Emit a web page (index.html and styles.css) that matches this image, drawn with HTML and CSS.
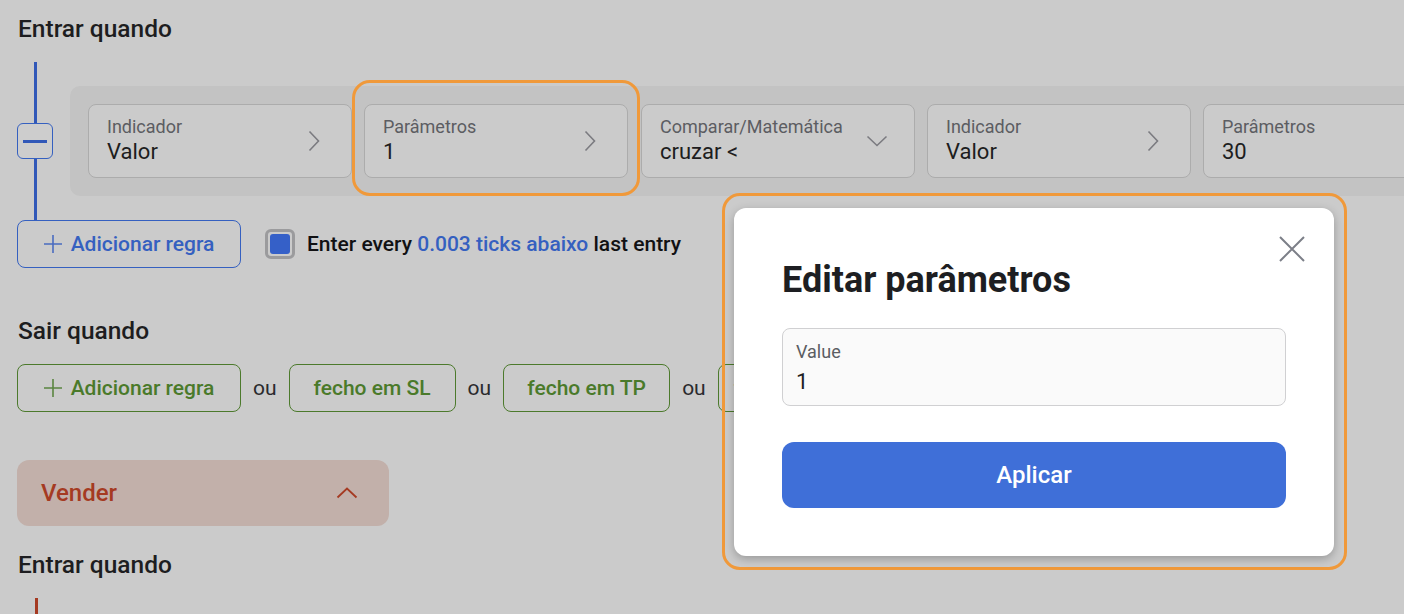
FILE: index.html
```html
<!DOCTYPE html>
<html lang="pt">
<head>
<meta charset="utf-8">
<title>Editar parâmetros</title>
<link rel="stylesheet" href="styles.css">
</head>
<body>
<div class="page">
  <h2 class="section-title first">Entrar quando</h2>
  <div class="rule-row">
    <div class="rail">
      <span class="rail-line"></span>
      <button class="minus-btn" aria-label="remover"><span></span></button>
      <span class="rail-line"></span>
    </div>
    <div class="rule-box">
      <div class="card">
        <div class="card-text"><span class="card-label">Indicador</span><span class="card-value">Valor</span></div>
        <svg class="chev" width="12" height="22" viewBox="0 0 12 22"><path d="M1.5 1.5 L10.5 11 L1.5 20.5" fill="none" stroke="#7b7b80" stroke-width="1.6"/></svg>
      </div>
      <div class="card highlighted">
        <div class="card-text"><span class="card-label">Parâmetros</span><span class="card-value">1</span></div>
        <svg class="chev" width="12" height="22" viewBox="0 0 12 22"><path d="M1.5 1.5 L10.5 11 L1.5 20.5" fill="none" stroke="#7b7b80" stroke-width="1.6"/></svg>
        <span class="hl-ring"></span>
      </div>
      <div class="card wide">
        <div class="card-text"><span class="card-label">Comparar/Matemática</span><span class="card-value">cruzar &lt;</span></div>
        <svg class="chev down" width="22" height="12" viewBox="0 0 22 12"><path d="M1.5 1.5 L11 10.5 L20.5 1.5" fill="none" stroke="#7b7b80" stroke-width="1.6"/></svg>
      </div>
      <div class="card">
        <div class="card-text"><span class="card-label">Indicador</span><span class="card-value">Valor</span></div>
        <svg class="chev" width="12" height="22" viewBox="0 0 12 22"><path d="M1.5 1.5 L10.5 11 L1.5 20.5" fill="none" stroke="#7b7b80" stroke-width="1.6"/></svg>
      </div>
      <div class="card">
        <div class="card-text"><span class="card-label">Parâmetros</span><span class="card-value">30</span></div>
        <svg class="chev" width="12" height="22" viewBox="0 0 12 22"><path d="M1.5 1.5 L10.5 11 L1.5 20.5" fill="none" stroke="#7b7b80" stroke-width="1.6"/></svg>
      </div>
    </div>
  </div>
  <div class="action-row">
    <button class="pill blue"><svg width="18" height="18" viewBox="0 0 18 18"><path d="M9 0 V18 M0 9 H18" stroke="currentColor" stroke-width="1.6" fill="none"/></svg>Adicionar regra</button>
    <span class="checkbox"><span></span></span>
    <span class="every">Enter every <span class="link">0.003 ticks abaixo</span> last entry</span>
  </div>

  <h2 class="section-title exit">Sair quando</h2>
  <div class="exit-row">
    <button class="pill green"><svg width="18" height="18" viewBox="0 0 18 18"><path d="M9 0 V18 M0 9 H18" stroke="currentColor" stroke-width="1.6" fill="none"/></svg>Adicionar regra</button>
    <span class="ou">ou</span>
    <button class="pill green narrow">fecho em SL</button>
    <span class="ou">ou</span>
    <button class="pill green narrow">fecho em TP</button>
    <span class="ou">ou</span>
    <button class="pill green narrow">fecho em hora</button>
  </div>

  <div class="sell-bar">
    <span>Vender</span>
    <svg width="22" height="12" viewBox="0 0 22 12"><path d="M1.5 10.5 L11 1.5 L20.5 10.5" fill="none" stroke="#a53a22" stroke-width="1.8"/></svg>
  </div>
  <h2 class="section-title sell-enter">Entrar quando</h2>
  <span class="red-line"></span>
</div>

<span class="modal-ring"></span>
<div class="modal" role="dialog">
  <svg class="close" width="26" height="26" viewBox="0 0 26 26"><path d="M1 1 L25 25 M25 1 L1 25" stroke="#7c7f88" stroke-width="2" fill="none"/></svg>
  <h1 class="modal-title">Editar parâmetros</h1>
  <div class="field">
    <span class="field-label">Value</span>
    <span class="field-value">1</span>
  </div>
  <button class="apply">Aplicar</button>
</div>
</body>
</html>
```
FILE: styles.css
```css
* { box-sizing: border-box; }
html, body { margin: 0; padding: 0; }
body {
  width: 1404px;
  height: 614px;
  overflow: hidden;
  background: #cbcbcb;
  font-family: Roboto, "Noto Sans", sans-serif;
  color: #1c1c1f;
  position: relative;
}
button { font-family: inherit; cursor: pointer; }
.page {
  padding: 14px 0 0 17px;
  display: flex;
  flex-direction: column;
  align-items: flex-start;
}
.section-title {
  margin: 0;
  font-size: 24.5px;
  font-weight: 500;
  line-height: 30px;
  color: #1d1d20;
  padding-left: 1px;
}
.rule-row {
  display: flex;
  align-items: center;
  gap: 17px;
  margin-top: 18px;
  width: 1400px;
}
.rail {
  width: 36px;
  height: 158px;
  display: flex;
  flex-direction: column;
  align-items: center;
  flex: none;
}
.rail-line {
  flex: 1;
  width: 3px;
  background: #3158b8;
}
.minus-btn {
  width: 36px;
  height: 36px;
  border: 1px solid #3560c0;
  border-radius: 6px;
  background: #cdcdcd;
  padding: 0;
  display: flex;
  align-items: center;
  justify-content: center;
}
.minus-btn span {
  width: 24px;
  height: 3px;
  background: #3158b8;
}
.rule-box {
  flex: none;
  background: #c3c3c3;
  border-radius: 10px;
  padding: 18px;
  display: flex;
  gap: 12px;
  width: 1400px;
}
.card {
  position: relative;
  flex: none;
  width: 264px;
  height: 74px;
  border: 1px solid #acacac;
  border-radius: 8px;
  background: #cbcbcb;
  display: flex;
  align-items: center;
  justify-content: space-between;
  padding: 0 31px 0 18px;
}
.card.wide { width: 274px; margin-left: 1px; padding-right: 26px; }
.card-text { display: flex; flex-direction: column; }
.card-label {
  font-size: 18px;
  line-height: 22px;
  color: #5c5d62;
}
.card-value {
  font-size: 22px;
  line-height: 28px;
  color: #1d1d20;
}
.hl-ring {
  position: absolute;
  left: -13px;
  right: -13px;
  top: -25px;
  bottom: -19px;
  border: 3px solid #f0993a;
  border-radius: 18px;
  pointer-events: none;
}
.action-row {
  display: flex;
  align-items: center;
}
.pill {
  height: 48px;
  border-radius: 8px;
  background: transparent;
  font-size: 21px;
  font-weight: 500;
  display: flex;
  align-items: center;
  justify-content: center;
  gap: 9px;
  padding: 0;
}
.pill svg { flex: none; }
.pill.blue {
  width: 224px;
  border: 1px solid #3560c0;
  color: #3560c0;
}
.pill.blue svg { color: #4a6cc0; }
.checkbox {
  margin-left: 24px;
  width: 30px;
  height: 30px;
  border: 3px solid #9b9b9d;
  border-radius: 6px;
  padding: 2px;
  display: flex;
}
.checkbox span {
  flex: 1;
  background: #3560c8;
  border-radius: 3px;
}
.every {
  margin-left: 12px;
  font-size: 21px;
  font-weight: 500;
  color: #111113;
}
.every .link { color: #3560c0; }
.section-title.exit { margin-top: 48px; }
.exit-row {
  display: flex;
  align-items: center;
  gap: 12px;
  margin-top: 18px;
}
.pill.green {
  border: 1px solid #4c7a2c;
  color: #4a7a2a;
  width: 224px;
}
.pill.green svg { color: #5a8540; }
.pill.green.narrow { width: 167px; }
.ou {
  font-size: 21px;
  color: #2a2a2d;
}
.sell-bar {
  margin-top: 48px;
  width: 372px;
  height: 66px;
  border-radius: 12px;
  background: #c2b0aa;
  display: flex;
  align-items: center;
  justify-content: space-between;
  padding: 0 31px 0 24px;
  color: #a53a22;
  font-size: 24px;
  font-weight: 500;
}
.section-title.sell-enter { margin-top: 24px; }
.red-line {
  display: block;
  margin-top: 18px;
  margin-left: 18px;
  width: 3px;
  height: 30px;
  background: #a53a22;
}
.modal-ring {
  position: absolute;
  left: 722px;
  top: 193px;
  width: 625px;
  height: 377px;
  border: 3px solid #f0993a;
  border-radius: 18px;
}
.modal {
  position: absolute;
  left: 734px;
  top: 208px;
  width: 600px;
  height: 348px;
  background: #ffffff;
  border-radius: 12px;
  box-shadow: 0 3px 10px rgba(0, 0, 0, 0.25);
  padding: 52px 48px 48px;
  display: flex;
  flex-direction: column;
}
.close {
  position: absolute;
  right: 29px;
  top: 28px;
}
.modal-title {
  margin: 0;
  font-size: 36px;
  font-weight: 700;
  line-height: 40px;
  color: #1d1e22;
}
.field {
  margin-top: 28px;
  height: 78px;
  flex: none;
  border: 1px solid #d0d0d2;
  border-radius: 8px;
  background: #fafafa;
  display: flex;
  flex-direction: column;
  padding: 12px 13px 0;
}
.field-label {
  font-size: 18px;
  line-height: 22px;
  color: #5b5d63;
}
.field-value {
  margin-top: 6px;
  font-size: 22px;
  line-height: 26px;
  color: #1d1e22;
}
.apply {
  margin-top: 36px;
  height: 66px;
  flex: none;
  border: none;
  border-radius: 12px;
  background: #3f6fd8;
  color: #ffffff;
  font-size: 24px;
  font-weight: 500;
}
```
